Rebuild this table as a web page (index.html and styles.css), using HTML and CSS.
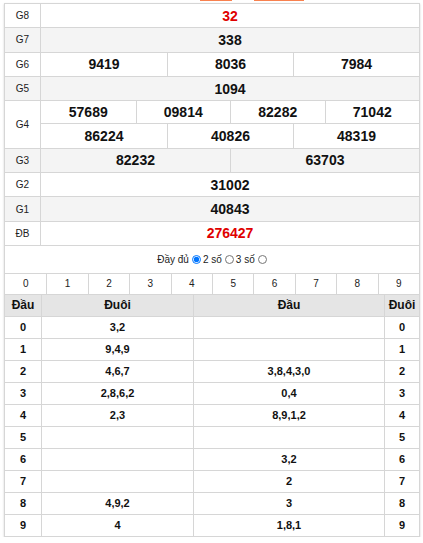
FILE: index.html
```html
<!DOCTYPE html>
<html>
<head>
<meta charset="utf-8">
<link rel="stylesheet" href="styles.css">
</head>
<body>
<div class="tabs"><span class="tab t1"></span><span class="tab t2"></span></div>
<div class="board">
  <div class="prize">
    <div class="row">
      <div class="lbl">G8</div>
      <div class="vals"><div class="v red">32</div></div>
    </div>
    <div class="row alt">
      <div class="lbl">G7</div>
      <div class="vals"><div class="v">338</div></div>
    </div>
    <div class="row">
      <div class="lbl">G6</div>
      <div class="vals c3"><div class="v">9419</div><div class="v">8036</div><div class="v">7984</div></div>
    </div>
    <div class="row alt">
      <div class="lbl">G5</div>
      <div class="vals"><div class="v">1094</div></div>
    </div>
    <div class="row">
      <div class="lbl">G4</div>
      <div class="stack">
        <div class="vals c4 sub"><div class="v">57689</div><div class="v">09814</div><div class="v">82282</div><div class="v">71042</div></div>
        <div class="vals c3"><div class="v">86224</div><div class="v">40826</div><div class="v">48319</div></div>
      </div>
    </div>
    <div class="row alt">
      <div class="lbl">G3</div>
      <div class="vals c2"><div class="v">82232</div><div class="v">63703</div></div>
    </div>
    <div class="row">
      <div class="lbl">G2</div>
      <div class="vals"><div class="v">31002</div></div>
    </div>
    <div class="row alt">
      <div class="lbl">G1</div>
      <div class="vals"><div class="v">40843</div></div>
    </div>
    <div class="row">
      <div class="lbl">ĐB</div>
      <div class="vals"><div class="v red">276427</div></div>
    </div>
  </div>

  <div class="opts">
    <label>Đầy đủ <input type="radio" name="m" checked></label>
    <label>2 số <input type="radio" name="m"></label>
    <label>3 số <input type="radio" name="m"></label>
  </div>

  <div class="digits">
    <div>0</div><div>1</div><div>2</div><div>3</div><div>4</div><div>5</div><div>6</div><div>7</div><div>8</div><div>9</div>
  </div>

  <div class="loto">
    <div class="lr head"><div>Đầu</div><div>Đuôi</div><div>Đầu</div><div>Đuôi</div></div>
    <div class="lr"><div>0</div><div>3,2</div><div></div><div>0</div></div>
    <div class="lr"><div>1</div><div>9,4,9</div><div></div><div>1</div></div>
    <div class="lr"><div>2</div><div>4,6,7</div><div>3,8,4,3,0</div><div>2</div></div>
    <div class="lr"><div>3</div><div>2,8,6,2</div><div>0,4</div><div>3</div></div>
    <div class="lr"><div>4</div><div>2,3</div><div>8,9,1,2</div><div>4</div></div>
    <div class="lr"><div>5</div><div></div><div></div><div>5</div></div>
    <div class="lr"><div>6</div><div></div><div>3,2</div><div>6</div></div>
    <div class="lr"><div>7</div><div></div><div>2</div><div>7</div></div>
    <div class="lr"><div>8</div><div>4,9,2</div><div>3</div><div>8</div></div>
    <div class="lr"><div>9</div><div>4</div><div>1,8,1</div><div>9</div></div>
  </div>
</div>
</body>
</html>
```

FILE: styles.css
```css
* { box-sizing: border-box; }
html, body { margin: 0; padding: 0; background: #fff; }
body {
  font-family: "Liberation Sans", Arial, sans-serif;
  color: #111;
}
.tabs {
  height: 1px;
  overflow: hidden;
  display: flex;
  gap: 22px;
  padding-left: 200px;
  margin-bottom: 2px;
}
.tab { display: block; height: 1px; background: #f8814f; }
.t1 { width: 32px; }
.t2 { width: 50px; }

.board {
  margin-left: 4px;
  width: 416px;
  border: 1px solid #d6d6d6;
  border-bottom: none;
  box-shadow: 0 1px 2px rgba(0,0,0,0.18);
}

.prize .row {
  display: grid;
  grid-template-columns: 36px 1fr;
  border-bottom: 1px solid #d6d6d6;
}
.prize .row.alt { background: #f4f4f4; }
.lbl {
  border-right: 1px solid #d6d6d6;
  display: flex;
  align-items: center;
  justify-content: center;
  font-size: 10px;
  color: #222;
}
.vals {
  display: grid;
  grid-template-columns: 1fr;
  height: 23.3px;
}
.vals.c2 { grid-template-columns: repeat(2, 1fr); }
.vals.c3 { grid-template-columns: repeat(3, 1fr); }
.vals.c4 { grid-template-columns: repeat(4, 1fr); }
.vals.sub { border-bottom: 1px solid #d6d6d6; }
.v {
  display: flex;
  align-items: center;
  justify-content: center;
  font-size: 14px;
  font-weight: bold;
  color: #111;
}
.v + .v { border-left: 1px solid #d6d6d6; }
.v.red { color: #e00000; }

.opts {
  height: 27px;
  display: flex;
  align-items: center;
  justify-content: center;
  font-size: 10px;
  color: #222;
  gap: 2px;
  padding-top: 1px;
}
.opts label { display: flex; align-items: center; }
.opts input {
  width: 9px;
  height: 9px;
  margin: 0 0 0 3px;
}

.digits {
  display: grid;
  grid-template-columns: repeat(10, 1fr);
  border-top: 1px solid #d6d6d6;
  border-bottom: 1px solid #d6d6d6;
}
.digits div {
  height: 20px;
  display: flex;
  align-items: center;
  justify-content: center;
  font-size: 10px;
  color: #222;
}
.digits div + div { border-left: 1px solid #d6d6d6; }

.lr {
  display: grid;
  grid-template-columns: 36px 152px 191px 1fr;
  border-bottom: 1px solid #d6d6d6;
}
.lr div {
  height: 21px;
  display: flex;
  align-items: center;
  justify-content: center;
  font-size: 11px;
  font-weight: bold;
  color: #111;
}
.lr div + div { border-left: 1px solid #d6d6d6; }
.lr.head { background: #e5e5e5; }
.lr.head div { font-size: 12px; }
```
